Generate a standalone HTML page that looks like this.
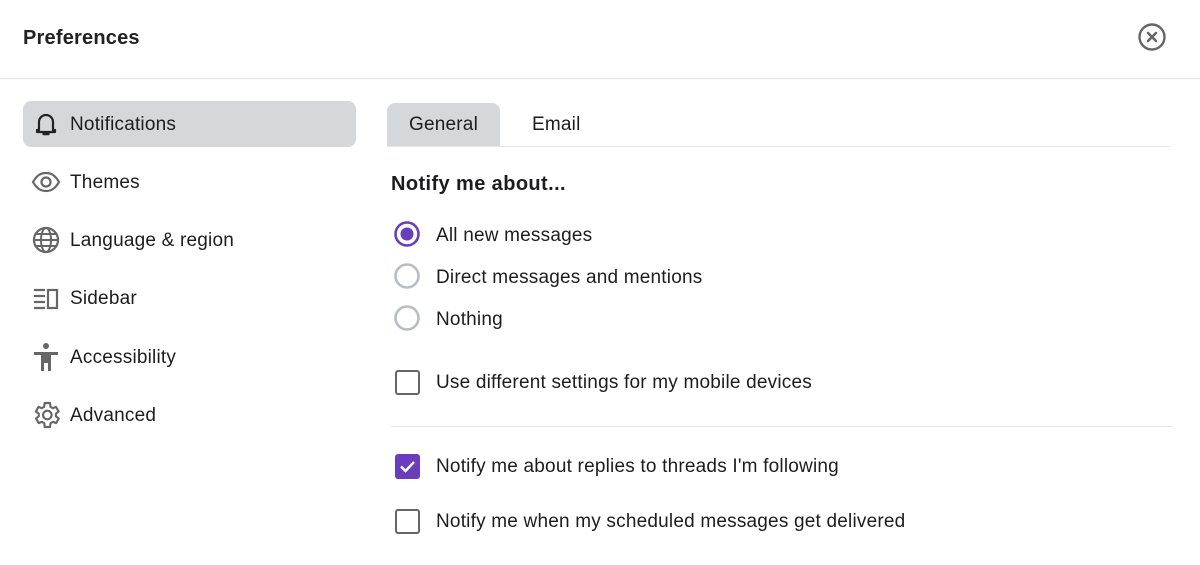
<!DOCTYPE html>
<html><head><style>
body{margin:0;width:1200px;height:565px;background:#fff;font-family:"Liberation Sans",sans-serif;color:#1d1d1f;position:relative;overflow:hidden}
.a{position:absolute;white-space:nowrap}
.t{font-size:19px;line-height:22px;letter-spacing:0.2px}
</style></head><body>
<div class="a" style="left:23px;top:26px;font-size:20px;line-height:24px;font-weight:bold;letter-spacing:0.2px;color:#222">Preferences</div>
<svg class="a" style="left:1137px;top:22px" width="30" height="30" viewBox="0 0 30 30"><circle cx="15" cy="15" r="12.5" fill="none" stroke="#666" stroke-width="2.4"/><path d="M11 11L19 19M19 11L11 19" stroke="#666" stroke-width="2.6" stroke-linecap="round"/></svg>
<div class="a" style="left:0;top:78px;width:1200px;height:1px;background:#dfe1e4"></div>

<div class="a" style="left:23px;top:101px;width:333px;height:46px;background:#d5d8db;border-radius:8px"></div>
<svg class="a" style="left:32px;top:110px" width="28" height="28" viewBox="0 0 28 28"><path d="M7 20V12a7 7 0 0 1 14 0v8h2v2H5v-2z" fill="none" stroke="#222" stroke-width="2.2" stroke-linejoin="round"/><path d="M11.5 24h5" stroke="#222" stroke-width="2.4" stroke-linecap="round"/></svg>
<div class="a t" style="left:70px;top:114px">Notifications</div>

<svg class="a" style="left:31px;top:168px" width="30" height="28" viewBox="0 0 30 28"><path d="M2 14C6 7 10 5 15 5s9 2 13 9c-4 7-8 9-13 9S6 21 2 14z" fill="none" stroke="#666" stroke-width="2.2"/><circle cx="15" cy="14" r="4.5" fill="none" stroke="#666" stroke-width="2.2"/></svg>
<div class="a t" style="left:70px;top:172px">Themes</div>

<svg class="a" style="left:32px;top:226px" width="28" height="28" viewBox="0 0 28 28"><circle cx="14" cy="14" r="12" fill="none" stroke="#666" stroke-width="2.2"/><ellipse cx="14" cy="14" rx="5" ry="12" fill="none" stroke="#666" stroke-width="2"/><path d="M2 14h24M4 8h20M4 20h20" stroke="#666" stroke-width="2"/></svg>
<div class="a t" style="left:70px;top:230px">Language &amp; region</div>

<svg class="a" style="left:32px;top:286px" width="28" height="26" viewBox="0 0 28 26"><path d="M2 4h11M2 10h11M2 16h11M2 22h11" stroke="#666" stroke-width="2.2"/><rect x="16" y="4" width="9" height="18" fill="none" stroke="#666" stroke-width="2.2"/></svg>
<div class="a t" style="left:70px;top:288px">Sidebar</div>

<svg class="a" style="left:32px;top:342px" width="28" height="30" viewBox="0 0 28 30"><circle cx="14" cy="4" r="3" fill="#666"/><path d="M2 10h24v3h-7v16h-3v-8h-4v8H9V13H2z" fill="#666"/></svg>
<div class="a t" style="left:70px;top:347px">Accessibility</div>

<svg class="a" style="left:30px;top:399px" width="32" height="32" viewBox="0 0 24 24"><path d="M19.4 13a7.5 7.5 0 0 0 0-2l2.1-1.6-2-3.5-2.5 1a7.6 7.6 0 0 0-1.7-1L15 3h-4l-.4 2.9a7.6 7.6 0 0 0-1.7 1l-2.5-1-2 3.5L6.6 11a7.5 7.5 0 0 0 0 2l-2.1 1.6 2 3.5 2.5-1a7.6 7.6 0 0 0 1.7 1L11 21h4l.4-2.9a7.6 7.6 0 0 0 1.7-1l2.5 1 2-3.5z" fill="none" stroke="#666" stroke-width="1.6" stroke-linejoin="round"/><circle cx="13" cy="12" r="3.2" fill="none" stroke="#666" stroke-width="1.6"/></svg>
<div class="a t" style="left:70px;top:405px">Advanced</div>

<div class="a" style="left:387px;top:103px;width:113px;height:43px;background:#d5d8db;border-radius:8px 8px 0 0"></div>
<div class="a t" style="left:387px;top:114px;width:113px;text-align:center">General</div>
<div class="a t" style="left:532px;top:114px">Email</div>
<div class="a" style="left:387px;top:146px;width:783px;height:1px;background:#e2e6ea"></div>

<div class="a" style="left:391px;top:173px;font-size:20px;line-height:23px;font-weight:bold;letter-spacing:0.4px">Notify me about...</div>

<svg class="a" style="left:393px;top:220px" width="28" height="112" viewBox="0 0 28 112"><circle cx="14" cy="14" r="11.5" fill="none" stroke="#6a3dbd" stroke-width="2.6"/><circle cx="14" cy="14" r="6.5" fill="#6a3dbd"/><circle cx="14" cy="56" r="11.5" fill="none" stroke="#b5bec5" stroke-width="2.6"/><circle cx="14" cy="98" r="11.5" fill="none" stroke="#b5bec5" stroke-width="2.6"/></svg>
<div class="a t" style="left:436px;top:225px">All new messages</div>
<div class="a t" style="left:436px;top:267px">Direct messages and mentions</div>
<div class="a t" style="left:436px;top:309px">Nothing</div>

<div class="a" style="left:395px;top:370px;width:21px;height:21px;border:2.5px solid #666;border-radius:3px"></div>
<div class="a t" style="left:436px;top:372px">Use different settings for my mobile devices</div>
<div class="a" style="left:391px;top:426px;width:781px;height:1px;background:#e2e6ea"></div>

<div class="a" style="left:395px;top:454px;width:25px;height:25px;background:#6a3dbd;border-radius:3px"></div>
<svg class="a" style="left:395px;top:454px" width="25" height="25" viewBox="0 0 25 25"><path d="M6 12.5l4.5 4.5 8.5-9" fill="none" stroke="#fff" stroke-width="2.4"/></svg>
<div class="a t" style="left:436px;top:456px">Notify me about replies to threads I'm following</div>

<div class="a" style="left:395px;top:509px;width:21px;height:21px;border:2.5px solid #666;border-radius:3px"></div>
<div class="a t" style="left:436px;top:511px">Notify me when my scheduled messages get delivered</div>
</body></html>
